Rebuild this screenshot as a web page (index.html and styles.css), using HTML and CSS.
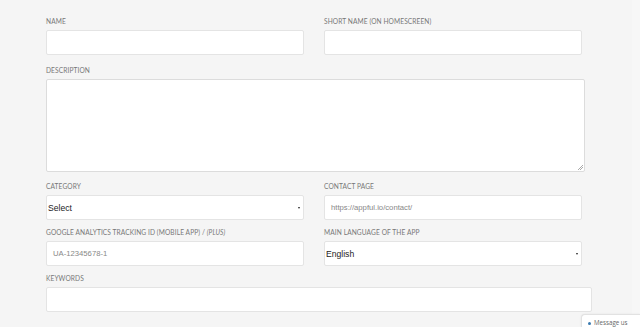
FILE: index.html
```html
<!DOCTYPE html>
<html>
<head>
<meta charset="utf-8">
<link rel="stylesheet" href="styles.css">
</head>
<body>
<div class="page">
  <form class="form">
    <div class="row first">
      <div class="field">
        <label class="label">Name</label>
        <div class="input"></div>
      </div>
      <div class="field">
        <label class="label">Short name (on homescreen)</label>
        <div class="input"></div>
      </div>
    </div>
    <div class="field desc">
      <label class="label">Description</label>
      <div class="textarea"><span class="grip"></span></div>
    </div>
    <div class="row">
      <div class="field">
        <label class="label">Category</label>
        <div class="input select"><span class="val">Select</span><span class="arrow"></span></div>
      </div>
      <div class="field">
        <label class="label">Contact page</label>
        <div class="input"><span class="ph">https://appful.io/contact/</span></div>
      </div>
    </div>
    <div class="row">
      <div class="field">
        <label class="label">Google Analytics Tracking ID (mobile app) / <em>(Plus)</em></label>
        <div class="input"><span class="ph">UA-12345678-1</span></div>
      </div>
      <div class="field">
        <label class="label">Main language of the app</label>
        <div class="input select"><span class="val">English</span><span class="arrow"></span></div>
      </div>
    </div>
    <div class="field">
      <label class="label">Keywords</label>
      <div class="input wide"></div>
    </div>
  </form>
  <div class="edge"></div>
</div>
<div class="msg"><span class="dot"></span>Message us</div>
</body>
</html>
```
FILE: styles.css
```css
html, body {
  margin: 0;
  padding: 0;
  background: #f5f5f5;
  overflow: hidden;
}
.page {
  width: 640px;
  height: 327px;
  display: flex;
}
.form {
  flex: 1;
  padding: 16px 0 0 46px;
  display: flex;
  flex-direction: column;
}
.row {
  display: flex;
  gap: 20px;
}
.field {
  display: flex;
  flex-direction: column;
  margin-bottom: 7px;
}
.first .field {
  margin-bottom: 10px;
}
.desc {
  margin-bottom: 9px;
}
.label {
  font-family: "Lato", "Open Sans", sans-serif;
  font-size: 6.6px;
  line-height: 10px;
  height: 10px;
  text-transform: uppercase;
  color: #777;
  margin-bottom: 4px;
  letter-spacing: 0.1px;
}
.label em {
  font-style: italic;
}
.input {
  width: 256px;
  height: 23px;
  background: #fff;
  border: 1px solid #e4e4e4;
  border-radius: 2px;
  display: flex;
  align-items: center;
  box-sizing: content-box;
  position: relative;
}
.wide {
  width: 544px;
}
.textarea {
  width: 537px;
  height: 91px;
  background: #fff;
  border: 1px solid #dcdcdc;
  border-radius: 2px;
  position: relative;
}
.grip {
  position: absolute;
  right: 1px;
  bottom: 1px;
  width: 5px;
  height: 5px;
  background: linear-gradient(135deg, transparent 45%, #aaa 45%, #aaa 55%, transparent 55%, transparent 70%, #aaa 70%, #aaa 80%, transparent 80%);
}
.ph {
  font-family: "Liberation Sans", Arial, sans-serif;
  font-size: 7.7px;
  color: #888;
  padding-left: 6px;
}
.select .val {
  font-family: "Liberation Sans", Arial, sans-serif;
  font-size: 8.6px;
  color: #222;
  padding-left: 1px;
}
.arrow {
  position: absolute;
  right: 3px;
  top: 11px;
  width: 0;
  height: 0;
  border-left: 1.5px solid transparent;
  border-right: 1.5px solid transparent;
  border-top: 2.5px solid #222;
}
.edge {
  width: 8px;
  background: #f7f7f7;
}
.msg {
  position: absolute;
  left: 581px;
  top: 314px;
  width: 59px;
  height: 13px;
  background: #fff;
  border: 1px solid #e2e2e2;
  border-right: 0;
  border-bottom: 0;
  border-radius: 4px 0 0 0;
  box-shadow: 0 0 2px rgba(0,0,0,0.08);
  font-family: "Open Sans", "Liberation Sans", sans-serif;
  font-size: 6.2px;
  color: #666;
  display: flex;
  align-items: flex-start;
  padding: 4px 0 0 6px;
  box-sizing: border-box;
  gap: 3px;
  line-height: 8px;
  white-space: nowrap;
}
.dot {
  width: 3px;
  height: 3px;
  border-radius: 50%;
  background: #3a7ab0;
  margin-top: 3px;
  flex: none;
}
```
